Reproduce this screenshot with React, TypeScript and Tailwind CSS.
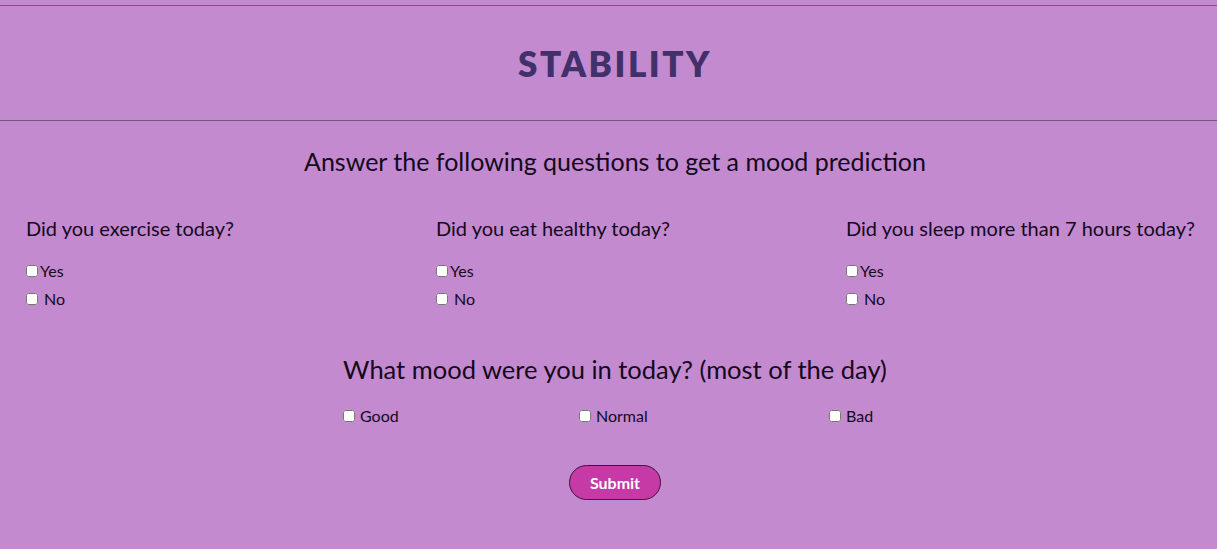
import React from "react";

const questions = [
  "Did you exercise today?",
  "Did you eat healthy today?",
  "Did you sleep more than 7 hours today?",
];

const font = { fontFamily: '"Gill Sans", Lato, "Open Sans", sans-serif' };

function Check({ label, gap = "ml-[3px]" }: { label: string; gap?: string }) {
  return (
    <label className="flex items-center text-[16px] leading-[20px] text-[#14091c]">
      <input type="checkbox" className="m-0 h-[12px] w-[12px] accent-white" />
      <span className={gap}>{label}</span>
    </label>
  );
}

export default function App() {
  return (
    <div className="h-[549px] overflow-hidden bg-[#c38ad0]">
      <div className="w-[1230px] pt-[5px] text-[#14091c]" style={font}>
        <header className="flex h-[116px] items-center justify-center border-y border-[#6c5a80]">
          <h1 className="text-[35px] font-extrabold tracking-[2.5px] text-[#41306a]">STABILITY</h1>
        </header>

        <p className="mt-[24px] text-center text-[25px] leading-[32px]">
          Answer the following questions to get a mood prediction
        </p>

        <div className="mt-[38px] grid grid-cols-3">
          {questions.map((q) => (
            <div key={q} className="pl-[26px]">
              <h3 className="text-[20px] leading-[26px]">{q}</h3>
              <div className="mt-[20px] flex flex-col gap-[8px]">
                <Check label="Yes" gap="ml-[2px]" />
                <Check label="No" gap="ml-[6px]" />
              </div>
            </div>
          ))}
        </div>

        <p className="mt-[44px] text-center text-[25.5px] leading-[32px]">
          What mood were you in today? (most of the day)
        </p>

        <div className="mt-[21px] flex pl-[343px]">
          <div className="w-[236px]">
            <Check label="Good" gap="ml-[5px]" />
          </div>
          <div className="w-[250px]">
            <Check label="Normal" gap="ml-[5px]" />
          </div>
          <Check label="Bad" gap="ml-[5px]" />
        </div>

        <div className="mt-[39px] flex justify-center">
          <button className="h-[35px] w-[92px] rounded-full border border-[#3a1838] bg-[#c53aa7] text-[16px] font-bold text-white">
            Submit
          </button>
        </div>
      </div>
    </div>
  );
}
